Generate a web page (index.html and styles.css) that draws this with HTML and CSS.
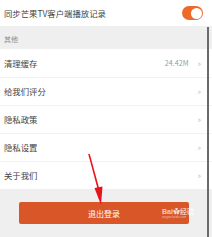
FILE: index.html
```html
<!DOCTYPE html>
<html>
<head>
<meta charset="utf-8">
<link rel="stylesheet" href="styles.css">
</head>
<body>
<div class="page">
  <div class="sync-row">
    <span class="label">同步芒果TV客户端播放记录</span>
    <span class="toggle"><span class="knob"></span></span>
  </div>
  <div class="section-head">其他</div>
  <div class="list">
    <div class="row"><span class="label">清理缓存</span><span class="right"><span class="value">24.42M</span><span class="chev">&gt;</span></span></div>
    <div class="row"><span class="label">给我们评分</span><span class="right"><span class="chev">&gt;</span></span></div>
    <div class="row"><span class="label">隐私政策</span><span class="right"><span class="chev">&gt;</span></span></div>
    <div class="row"><span class="label">隐私设置</span><span class="right"><span class="chev">&gt;</span></span></div>
    <div class="row"><span class="label">关于我们</span><span class="right"><span class="chev">&gt;</span></span></div>
  </div>
  <div class="footer">
    <div class="logout">退出登录</div>
  </div>
  <div class="scrollbar"></div>
  <svg class="arrow" width="212" height="237" viewBox="0 0 212 237">
    <polygon points="88.2,154 89.8,154 99.6,190 98,190.4" fill="#e8141b"/>
    <polygon points="94.5,188 102.5,186.5 101,205" fill="#e8141b"/>
  </svg>
  <div class="watermark">
    <span class="wm-main">Bai<span class="paw">&#10047;</span>经验</span>
    <span class="wm-sub">jingyan.baidu.com</span>
  </div>
</div>
</body>
</html>
```
FILE: styles.css
```css
html, body {
  margin: 0;
  padding: 0;
}
body {
  font-family: "Noto Sans CJK SC", "Noto Sans", sans-serif;
  background: #efefef;
  color: #444;
}
.page {
  position: relative;
  width: 212px;
  height: 237px;
  overflow: hidden;
  background: #efefef;
}
.sync-row {
  height: 26px;
  background: #fff;
  display: flex;
  align-items: center;
  justify-content: space-between;
  padding: 0 9px 0 4px;
  box-sizing: border-box;
}
.label {
  font-size: 8.4px;
  color: #444;
  line-height: 1;
}
.toggle {
  width: 21px;
  height: 14px;
  border-radius: 7px;
  background: #ee6a2b;
  display: flex;
  align-items: center;
  justify-content: flex-end;
  padding-right: 1.5px;
  box-sizing: border-box;
}
.knob {
  width: 11px;
  height: 11px;
  border-radius: 50%;
  background: #fff;
}
.section-head {
  height: 23px;
  box-sizing: border-box;
  padding: 10px 0 0 4px;
  font-size: 7px;
  color: #8a8a8a;
  line-height: 1;
}
.list {
  background: #fff;
}
.row {
  height: 28px;
  box-sizing: border-box;
  display: flex;
  align-items: center;
  justify-content: space-between;
  padding: 0 11px 0 4px;
  border-top: 1px solid #f2f2f2;
}
.row:first-child {
  border-top: none;
}
.right {
  display: flex;
  align-items: center;
  gap: 8px;
}
.value {
  font-size: 7.2px;
  color: #9a9a9a;
}
.chev {
  font-size: 8px;
  color: #b0b0b0;
  transform: scaleX(0.7);
}
.footer {
  padding: 13px 23px 0 19px;
}
.logout {
  height: 22px;
  background: #d85628;
  border-radius: 2px;
  color: #fff;
  font-size: 8px;
  display: flex;
  align-items: center;
  justify-content: center;
}
.scrollbar {
  position: absolute;
  left: 207px;
  top: 27px;
  width: 1.5px;
  height: 210px;
  background: #6a6a6a;
}
.arrow {
  position: absolute;
  left: 0;
  top: 0;
}
.watermark {
  position: absolute;
  left: 162px;
  top: 208px;
  display: flex;
  flex-direction: column;
  align-items: flex-start;
  line-height: 1;
}
.wm-main {
  font-family: "Liberation Sans", "Noto Sans CJK SC", sans-serif;
  font-size: 7px;
  font-weight: bold;
  color: rgba(255, 255, 255, 0.7);
}
.paw {
  font-size: 7px;
  color: rgba(255, 255, 255, 0.85);
}
.wm-sub {
  font-family: "Liberation Sans", sans-serif;
  font-size: 3px;
  color: rgba(255, 255, 255, 0.6);
  margin-top: 1px;
}
```
